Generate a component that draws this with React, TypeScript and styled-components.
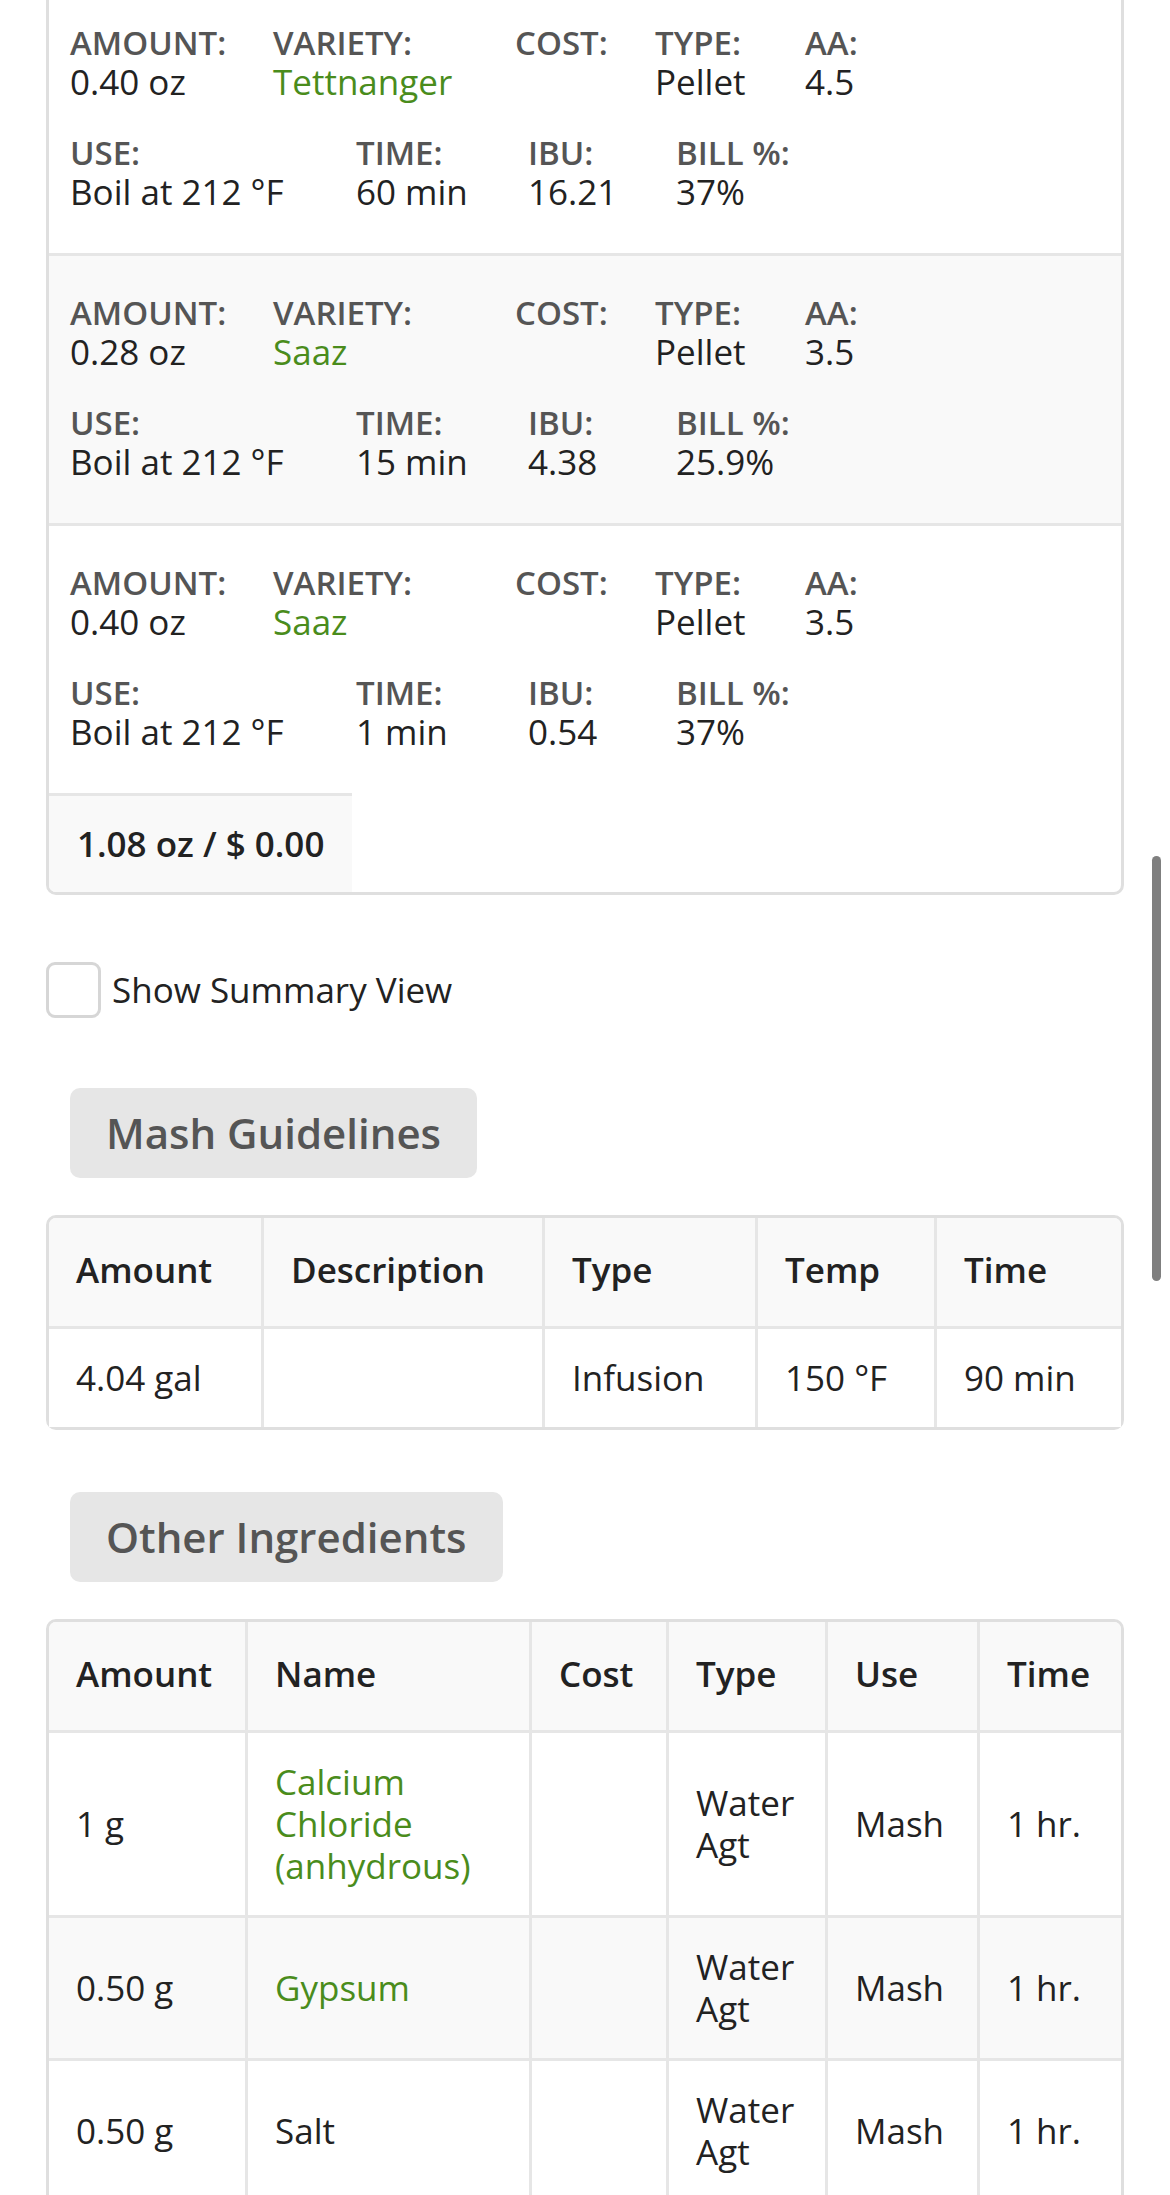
import React from 'react'
import styled, { createGlobalStyle } from 'styled-components'

const GlobalStyle = createGlobalStyle`
  html, body {
    margin: 0;
    padding: 0;
    background: #fff;
    overflow: hidden;
  }
  body {
    font-family: 'Open Sans', 'Liberation Sans', sans-serif;
    color: #222;
  }
  * {
    box-sizing: border-box;
  }
`

const linkGreen = '#4a8c1c'
const lineColor = '#e6e6e6'

const Page = styled.div`
  position: relative;
  height: 2195px;
  padding: 0 46px;
  overflow: hidden;
`
const ScrollThumb = styled.div`
  position: absolute;
  top: 856px;
  right: 9px;
  width: 9px;
  height: 425px;
  border-radius: 5px;
  background: #7f7f7f;
`
const HopBox = styled.div`
  margin-top: -20px;
  border: 3px solid #dfdfdf;
  border-radius: 10px;
  overflow: hidden;
`
const HopRow = styled.div<{ $striped?: boolean }>`
  display: flex;
  flex-direction: column;
  gap: 32px;
  padding: 39px 21px 40px;
  border-top: 3px solid ${lineColor};
  background: ${props => (props.$striped ? '#f9f9f9' : '#fff')};
`
const FieldLine = styled.div<{ $cols: string }>`
  display: grid;
  grid-template-columns: ${props => props.$cols};
`
const Field = styled.div`
  display: flex;
  flex-direction: column;
`
const FieldLabel = styled.span`
  font-size: 33px;
  line-height: 36px;
  font-weight: 600;
  color: #555;
  text-transform: uppercase;
  white-space: nowrap;
`
const FieldValue = styled.span<{ $link?: boolean }>`
  min-height: 42px;
  font-size: 35px;
  line-height: 42px;
  color: ${props => (props.$link ? linkGreen : '#222')};
  white-space: nowrap;
`
const HopFooter = styled.div`
  width: fit-content;
  padding: 22px 28px;
  border-top: 3px solid ${lineColor};
  background: #f9f9f9;
  font-size: 35px;
  line-height: 52px;
  font-weight: 600;
  color: #222;
`
const CheckRow = styled.label`
  display: flex;
  align-items: center;
  gap: 11px;
  margin-top: 67px;
  font-size: 35px;
  line-height: 42px;
  color: #222;
`
const CheckBox = styled.span`
  width: 55px;
  height: 56px;
  border: 3px solid #d6d6d6;
  border-radius: 9px;
  background: #fff;
`
const SectionTitle = styled.h2<{ $top: number }>`
  width: fit-content;
  margin: ${props => props.$top}px 0 0 24px;
  padding: 16px 36px;
  border-radius: 10px;
  background: #e6e6e6;
  font-size: 42px;
  line-height: 58px;
  font-weight: 600;
  color: #555;
`
const Table = styled.table`
  width: 100%;
  margin-top: 37px;
  table-layout: fixed;
  border-collapse: separate;
  border-spacing: 0;
  border: 3px solid #dfdfdf;
  border-radius: 10px;
`
const Col = styled.col<{ $w: number }>`
  width: ${props => props.$w}px;
`
const HeadCell = styled.th`
  padding: 31px 27px 35px;
  border-bottom: 3px solid ${lineColor};
  background: #f9f9f9;
  font-size: 35px;
  line-height: 42px;
  font-weight: 600;
  text-align: left;
  vertical-align: middle;
  white-space: nowrap;
  color: #222;

  th + & {
    border-left: 3px solid ${lineColor};
  }
  &:first-child {
    border-top-left-radius: 7px;
  }
  &:last-child {
    border-top-right-radius: 7px;
  }
`
const BodyRow = styled.tr<{ $striped?: boolean }>`
  background: ${props => (props.$striped ? '#f9f9f9' : '#fff')};
`
const Cell = styled.td<{ $link?: boolean }>`
  padding: 28px 27px;
  font-size: 35px;
  line-height: 42px;
  text-align: left;
  vertical-align: middle;
  color: ${props => (props.$link ? linkGreen : '#222')};

  td + & {
    border-left: 3px solid ${lineColor};
  }
  tr + tr > & {
    border-top: 3px solid ${lineColor};
  }
`

interface Hop {
  amount: string
  variety: string
  type: string
  aa: string
  use: string
  time: string
  ibu: string
  bill: string
}

const hops: Hop[] = [
  { amount: '0.40 oz', variety: 'Tettnanger', type: 'Pellet', aa: '4.5', use: 'Boil at 212 °F', time: '60 min', ibu: '16.21', bill: '37%' },
  { amount: '0.28 oz', variety: 'Saaz', type: 'Pellet', aa: '3.5', use: 'Boil at 212 °F', time: '15 min', ibu: '4.38', bill: '25.9%' },
  { amount: '0.40 oz', variety: 'Saaz', type: 'Pellet', aa: '3.5', use: 'Boil at 212 °F', time: '1 min', ibu: '0.54', bill: '37%' }
]

const others = [
  { amount: '1 g', name: 'Calcium Chloride (anhydrous)', link: true },
  { amount: '0.50 g', name: 'Gypsum', link: true },
  { amount: '0.50 g', name: 'Salt', link: false }
]

function HopItem({ hop, striped }: { hop: Hop; striped: boolean }) {
  return (
    <HopRow $striped={striped}>
      <FieldLine $cols="203px 242px 140px 150px auto">
        <Field><FieldLabel>Amount:</FieldLabel><FieldValue>{hop.amount}</FieldValue></Field>
        <Field><FieldLabel>Variety:</FieldLabel><FieldValue $link>{hop.variety}</FieldValue></Field>
        <Field><FieldLabel>Cost:</FieldLabel><FieldValue /></Field>
        <Field><FieldLabel>Type:</FieldLabel><FieldValue>{hop.type}</FieldValue></Field>
        <Field><FieldLabel>AA:</FieldLabel><FieldValue>{hop.aa}</FieldValue></Field>
      </FieldLine>
      <FieldLine $cols="286px 172px 148px auto">
        <Field><FieldLabel>Use:</FieldLabel><FieldValue>{hop.use}</FieldValue></Field>
        <Field><FieldLabel>Time:</FieldLabel><FieldValue>{hop.time}</FieldValue></Field>
        <Field><FieldLabel>IBU:</FieldLabel><FieldValue>{hop.ibu}</FieldValue></Field>
        <Field><FieldLabel>Bill %:</FieldLabel><FieldValue>{hop.bill}</FieldValue></Field>
      </FieldLine>
    </HopRow>
  )
}

export default function App() {
  return (
    <Page>
      <GlobalStyle />

      <HopBox>
        {hops.map((hop, i) => (
          <HopItem key={i} hop={hop} striped={i % 2 === 1} />
        ))}
        <HopFooter>1.08 oz / $ 0.00</HopFooter>
      </HopBox>

      <CheckRow>
        <CheckBox />
        Show Summary View
      </CheckRow>

      <SectionTitle $top={70}>Mash Guidelines</SectionTitle>
      <Table>
        <colgroup>
          <Col $w={212} />
          <Col $w={281} />
          <Col $w={213} />
          <Col $w={179} />
          <Col $w={187} />
        </colgroup>
        <thead>
          <tr>
            <HeadCell>Amount</HeadCell>
            <HeadCell>Description</HeadCell>
            <HeadCell>Type</HeadCell>
            <HeadCell>Temp</HeadCell>
            <HeadCell>Time</HeadCell>
          </tr>
        </thead>
        <tbody>
          <BodyRow>
            <Cell>4.04 gal</Cell>
            <Cell />
            <Cell>Infusion</Cell>
            <Cell>150 °F</Cell>
            <Cell>90 min</Cell>
          </BodyRow>
        </tbody>
      </Table>

      <SectionTitle $top={62}>Other Ingredients</SectionTitle>
      <Table>
        <colgroup>
          <Col $w={196} />
          <Col $w={284} />
          <Col $w={137} />
          <Col $w={159} />
          <Col $w={152} />
          <Col $w={144} />
        </colgroup>
        <thead>
          <tr>
            <HeadCell>Amount</HeadCell>
            <HeadCell>Name</HeadCell>
            <HeadCell>Cost</HeadCell>
            <HeadCell>Type</HeadCell>
            <HeadCell>Use</HeadCell>
            <HeadCell>Time</HeadCell>
          </tr>
        </thead>
        <tbody>
          {others.map((item, i) => (
            <BodyRow key={i} $striped={i % 2 === 1}>
              <Cell>{item.amount}</Cell>
              <Cell $link={item.link}>{item.name}</Cell>
              <Cell />
              <Cell>Water Agt</Cell>
              <Cell>Mash</Cell>
              <Cell>1 hr.</Cell>
            </BodyRow>
          ))}
        </tbody>
      </Table>

      <ScrollThumb />
    </Page>
  )
}
